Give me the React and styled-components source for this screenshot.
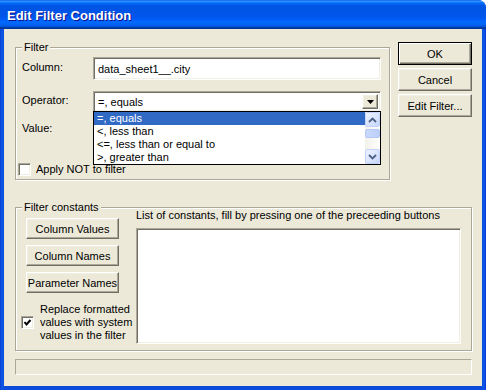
import React from "react";
import styled, { createGlobalStyle } from "styled-components";

const Global = createGlobalStyle`
  * { box-sizing: border-box; }
  html, body { margin: 0; padding: 0; background: #fff; }
  body {
    font-family: "Liberation Sans", Arial, sans-serif;
    font-size: 11px;
    color: #000;
  }
`;

const Window = styled.div`
  width: 486px;
  height: 390px;
  display: flex;
  flex-direction: column;
  background: linear-gradient(to right, #0a3fd0 0, #0c5ae6 2px, #0a4bdc 4px, #0a4bdc 482px, #0c5ae6 484px, #0831d9 486px);
  border-radius: 0 8px 0 0;
  overflow: hidden;
`;

const TitleBar = styled.div`
  height: 29px;
  flex: none;
  display: flex;
  align-items: center;
  padding-left: 7px;
  background: linear-gradient(to bottom, #0058ee 0%, #3593ff 4%, #288eff 6%, #127dff 8%, #036ffc 10%, #0262ee 14%, #0057e5 20%, #0054e3 24%, #0055eb 56%, #005bf5 66%, #026afe 76%, #0062ef 86%, #0052d6 92%, #0040ab 94%, #003092 100%);
`;

const Title = styled.span`
  font-family: "Liberation Sans", Arial, sans-serif;
  font-weight: bold;
  font-size: 13px;
  color: #fff;
  text-shadow: 1px 1px #0f1089;
  padding-top: 1px;
`;

const Client = styled.div`
  flex: 1;
  margin: 0 4px 4px 4px;
  background: #ece9d8;
  padding: 13px 10px 0 11px;
  display: flex;
  flex-direction: column;
`;

const TopRow = styled.div`
  display: flex;
  align-items: flex-start;
  gap: 8px;
`;

const GroupBox = styled.div`
  position: relative;
  width: ${(p) => (p.$w ? `${p.$w}px` : "auto")};
  height: ${(p) => p.$h}px;
  margin-top: ${(p) => p.$mt || 0}px;
  border: 1px solid #aca899;
  box-shadow: 1px 1px 0 #fff, inset 1px 1px 0 #fff;
`;

const Legend = styled.span`
  position: absolute;
  top: -7px;
  left: 6px;
  padding: 0 2px;
  line-height: 13px;
  background: #ece9d8;
`;

const FilterBody = styled.div`
  padding: 9px 8px 0 2px;
  display: flex;
  flex-direction: column;
`;

const FieldRow = styled.div`
  display: flex;
  align-items: center;
  height: ${(p) => p.$h}px;
  margin-top: ${(p) => p.$mt || 0}px;
`;

const Label = styled.span`
  width: 75px;
  flex: none;
  padding-left: 4px;
  line-height: 13px;
  margin-top: ${(p) => p.$shift || 0}px;
`;

const sunken = `
  border: 1px solid;
  border-color: #aca899 #fff #fff #aca899;
  box-shadow: inset 1px 1px 0 #716f64, inset -1px -1px 0 #f1efe2;
  background: #fff;
`;

const TextBox = styled.div`
  ${sunken}
  flex: 1;
  height: 100%;
  display: flex;
  align-items: center;
  padding-left: 4px;
`;

const Combo = styled.div`
  ${sunken}
  position: relative;
  flex: 1;
  height: 100%;
  display: flex;
  align-items: center;
  padding: 2px 2px 2px 4px;
`;

const ComboText = styled.span`
  flex: 1;
`;

const raised = `
  background: #ece9d8;
  border: 1px solid;
  border-color: #fff #716f64 #716f64 #fff;
  box-shadow: inset -1px -1px 0 #aca899, inset 1px 1px 0 #f1efe2;
`;

const DropButton = styled.div`
  ${raised}
  width: 16px;
  height: 100%;
  display: flex;
  align-items: center;
  justify-content: center;
`;

const DropList = styled.div`
  position: absolute;
  top: 100%;
  left: -1px;
  right: -1px;
  height: 54px;
  border: 1px solid #000;
  background: #fff;
  display: flex;
  z-index: 2;
`;

const Items = styled.div`
  flex: 1;
  display: flex;
  flex-direction: column;
`;

const Item = styled.div`
  height: 13px;
  line-height: 13px;
  padding-left: 3px;
  white-space: nowrap;
  background: ${(p) => (p.$selected ? "#316ac5" : "transparent")};
  color: ${(p) => (p.$selected ? "#fff" : "#000")};
`;

const ScrollBar = styled.div`
  width: 15px;
  display: flex;
  flex-direction: column;
  background: linear-gradient(to right, #f3f1ec, #fefefb);
`;

const ScrollBtn = styled.div`
  height: 15px;
  flex: none;
  border: 1px solid #c3d3fd;
  border-radius: 2px;
  background: linear-gradient(135deg, #eef3fe, #c6d6fc);
  display: flex;
  align-items: center;
  justify-content: center;
`;

const Thumb = styled.div`
  height: 9px;
  margin-top: 2px;
  border: 1px solid #b4c8f6;
  border-radius: 2px;
  background: linear-gradient(to right, #cad8fc, #bccffb);
`;

const Spacer = styled.div`
  flex: 1;
`;

const CheckRow = styled.div`
  display: flex;
  align-items: center;
  gap: ${(p) => p.$gap}px;
  margin-top: ${(p) => p.$mt || 0}px;
`;

const CheckBox = styled.div`
  ${sunken}
  width: 13px;
  height: 13px;
  flex: none;
  display: flex;
  align-items: center;
  justify-content: center;
`;

const CheckText = styled.span`
  line-height: 13px;
  white-space: nowrap;
`;

const ButtonColumn = styled.div`
  display: flex;
  flex-direction: column;
  gap: 3px;
  width: 74px;
`;

const Button = styled.div`
  ${raised}
  height: ${(p) => p.$h || 23}px;
  width: ${(p) => (p.$w ? `${p.$w}px` : "100%")};
  display: flex;
  align-items: center;
  justify-content: center;
  white-space: nowrap;
  ${(p) =>
    p.$default &&
    `
    border-color: #000;
    box-shadow: inset 1px 1px 0 #fff, inset -1px -1px 0 #716f64, inset -2px -2px 0 #aca899;
  `}
`;

const ConstBody = styled.div`
  display: flex;
  height: 100%;
  padding: 10px 10px 0 5px;
`;

const LeftCol = styled.div`
  width: 115px;
  flex: none;
  display: flex;
  flex-direction: column;
`;

const ButtonStack = styled.div`
  display: flex;
  flex-direction: column;
  gap: 6px;
  margin-left: 5px;
`;

const RightCol = styled.div`
  flex: 1;
  min-width: 0;
  display: flex;
  flex-direction: column;
  margin-top: -10px;
`;

const ListCaption = styled.div`
  line-height: 13px;
  margin-top: 1px;
  white-space: nowrap;
`;

const ListBox = styled.div`
  ${sunken}
  height: 116px;
  margin-top: 6px;
`;

const StatusBar = styled.div`
  height: 16px;
  margin-top: 8px;
  border: 1px solid;
  border-color: #aca899 #fff #fff #aca899;
`;

const Chevron = ({ up }) => (
  <svg width="9" height="6" viewBox="0 0 9 6">
    <polyline
      points={up ? "1,5 4.5,1.5 8,5" : "1,1 4.5,4.5 8,1"}
      fill="none"
      stroke="#4d6185"
      strokeWidth="1.8"
    />
  </svg>
);

const operators = ["=, equals", "<, less than", "<=, less than or equal to", ">, greater than"];

export default function App() {
  return (
    <>
      <Global />
      <Window>
        <TitleBar>
          <Title>Edit Filter Condition</Title>
        </TitleBar>
        <Client>
          <TopRow>
            <GroupBox $w={375} $h={133} $mt={5}>
              <Legend>Filter</Legend>
              <FilterBody>
                <FieldRow $h={23}>
                  <Label $shift={-3}>Column:</Label>
                  <TextBox>data_sheet1__.city</TextBox>
                </FieldRow>
                <FieldRow $h={21} $mt={11}>
                  <Label $shift={-2}>Operator:</Label>
                  <Combo>
                    <ComboText>=, equals</ComboText>
                    <DropButton>
                      <svg width="7" height="4" viewBox="0 0 7 4">
                        <polygon points="0,0 7,0 3.5,4" fill="#000" />
                      </svg>
                    </DropButton>
                    <DropList>
                      <Items>
                        {operators.map((o, i) => (
                          <Item key={o} $selected={i === 0}>
                            {o}
                          </Item>
                        ))}
                      </Items>
                      <ScrollBar>
                        <ScrollBtn>
                          <Chevron up />
                        </ScrollBtn>
                        <Thumb />
                        <Spacer />
                        <ScrollBtn>
                          <Chevron />
                        </ScrollBtn>
                      </ScrollBar>
                    </DropList>
                  </Combo>
                </FieldRow>
                <FieldRow $h={23} $mt={5}>
                  <Label>Value:</Label>
                  <TextBox />
                </FieldRow>
                <CheckRow $gap={5} $mt={23}>
                  <CheckBox />
                  <CheckText>Apply NOT to filter</CheckText>
                </CheckRow>
              </FilterBody>
            </GroupBox>
            <ButtonColumn>
              <Button $default>OK</Button>
              <Button>Cancel</Button>
              <Button>Edit Filter...</Button>
            </ButtonColumn>
          </TopRow>

          <GroupBox $h={144} $mt={27}>
            <Legend>Filter constants</Legend>
            <ConstBody>
              <LeftCol>
                <ButtonStack>
                  <Button $w={93} $h={21}>Column Values</Button>
                  <Button $w={93} $h={21}>Column Names</Button>
                  <Button $w={93} $h={21}>Parameter Names</Button>
                </ButtonStack>
                <CheckRow $gap={6} $mt={10}>
                  <CheckBox>
                    <svg width="9" height="9" viewBox="0 0 9 9">
                      <polyline points="1.5,4 3.5,6.5 7.5,2" fill="none" stroke="#000" strokeWidth="2" />
                    </svg>
                  </CheckBox>
                  <CheckText>
                    Replace formatted
                    <br />
                    values with system
                    <br />
                    values in the filter
                  </CheckText>
                </CheckRow>
              </LeftCol>
              <RightCol>
                <ListCaption>List of constants, fill by pressing one of the preceeding buttons</ListCaption>
                <ListBox />
              </RightCol>
            </ConstBody>
          </GroupBox>

          <StatusBar />
        </Client>
      </Window>
    </>
  );
}
